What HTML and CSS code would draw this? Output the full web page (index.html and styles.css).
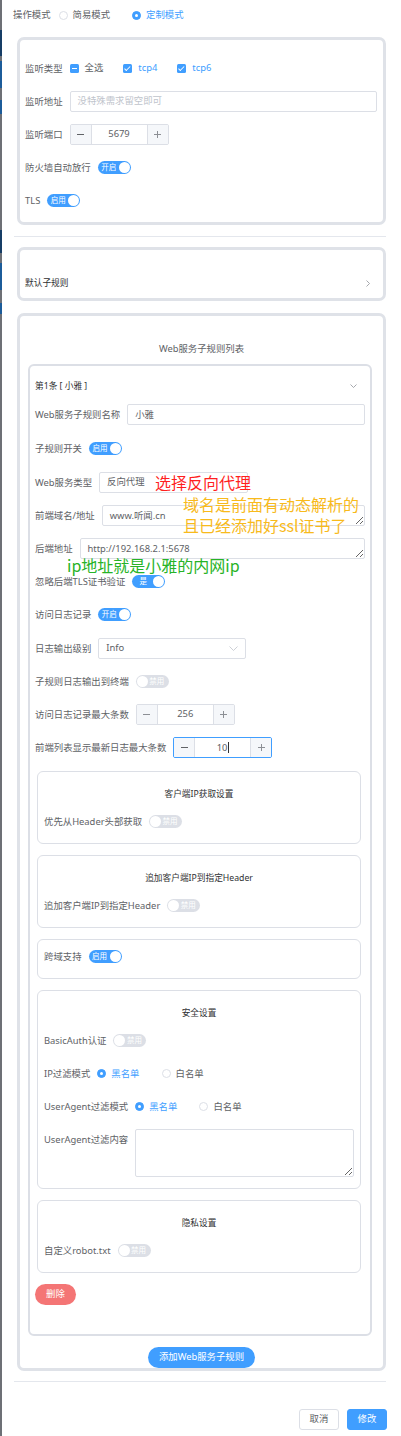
FILE: index.html
```html
<!DOCTYPE html>
<html lang="zh-CN">
<head>
<meta charset="utf-8">
<title>Web服务规则</title>
<link rel="stylesheet" href="styles.css">
</head>
<body>
<div class="app">
  <div class="edge"></div>
  <main class="main">
    <div class="mode-row">
      <span class="lbl">操作模式</span>
      <span class="radio-group">
        <span class="radio"><span class="rd"></span><span>简易模式</span></span>
        <span class="radio active"><span class="rd on"></span><span>定制模式</span></span>
      </span>
    </div>

    <section class="card card-listen">
      <div class="row">
        <span class="lbl">监听类型</span>
        <span class="check-group">
          <span class="check"><span class="cb ind"></span><span>全选</span></span>
          <span class="check active"><span class="cb chk"></span><span>tcp4</span></span>
          <span class="check active"><span class="cb chk"></span><span>tcp6</span></span>
        </span>
      </div>
      <div class="row">
        <span class="lbl">监听地址</span>
        <span class="inp"><span class="ph">没特殊需求留空即可</span></span>
      </div>
      <div class="row">
        <span class="lbl">监听端口</span>
        <span class="num">
          <span class="num-btn minus"><svg width="7" height="7" viewBox="0 0 7 7"><path d="M0 3.5H7" stroke="#606266" stroke-width="1"/></svg></span>
          <span class="num-val">5679</span>
          <span class="num-btn plus"><svg width="7" height="7" viewBox="0 0 7 7"><path d="M0 3.5H7M3.5 0V7" stroke="#8c8f95" stroke-width="1"/></svg></span>
        </span>
      </div>
      <div class="row">
        <span class="lbl">防火墙自动放行</span>
        <span class="sw on"><span class="sw-txt">开启</span><span class="sw-knob"></span></span>
      </div>
      <div class="row">
        <span class="lbl">TLS</span>
        <span class="sw on"><span class="sw-txt">启用</span><span class="sw-knob"></span></span>
      </div>
    </section>

    <div class="divider"></div>

    <section class="card card-default">
      <span>默认子规则</span>
      <svg width="4" height="7" viewBox="0 0 4 7"><path d="M0.5 0.5L3.5 3.5L0.5 6.5" fill="none" stroke="#909399" stroke-width="0.8"/></svg>
    </section>

    <section class="card card-web">
      <div class="card-title">Web服务子规则列表</div>
      <div class="rule-card">
        <div class="rule-head">
          <span>第1条 [ 小雅 ]</span>
          <svg width="7" height="4" viewBox="0 0 7 4"><path d="M0.5 0.5L3.5 3.5L6.5 0.5" fill="none" stroke="#909399" stroke-width="0.8"/></svg>
        </div>
        <div class="rule-form">
          <div class="row first">
            <span class="lbl">Web服务子规则名称</span>
            <span class="inp">小雅</span>
          </div>
          <div class="row">
            <span class="lbl">子规则开关</span>
            <span class="sw on"><span class="sw-txt">启用</span><span class="sw-knob"></span></span>
          </div>
          <div class="row note-host">
            <span class="lbl">Web服务类型</span>
            <span class="sel sel-type">反向代理</span>
            <span class="note note-red">选择反向代理</span>
          </div>
          <div class="row note-host">
            <span class="lbl">前端域名/地址</span>
            <textarea class="ta" rows="1">www.听闻.cn</textarea>
            <span class="note note-orange">域名是前面有动态解析的<br>且已经添加好ssl证书了</span>
          </div>
          <div class="row note-host">
            <span class="lbl">后端地址</span>
            <textarea class="ta" rows="1">http://192.168.2.1:5678</textarea>
            <span class="note note-green">ip地址就是小雅的内网ip</span>
          </div>
          <div class="row">
            <span class="lbl">忽略后端TLS证书验证</span>
            <span class="sw on"><span class="sw-txt">是</span><span class="sw-knob"></span></span>
          </div>
          <div class="row">
            <span class="lbl">访问日志记录</span>
            <span class="sw on"><span class="sw-txt">开启</span><span class="sw-knob"></span></span>
          </div>
          <div class="row">
            <span class="lbl">日志输出级别</span>
            <span class="sel sel-level">
              <span>Info</span>
              <svg width="9" height="5" viewBox="0 0 9 5"><path d="M0.5 0.5L4.5 4.5L8.5 0.5" fill="none" stroke="#c0c4cc" stroke-width="0.8"/></svg>
            </span>
          </div>
          <div class="row">
            <span class="lbl">子规则日志输出到终端</span>
            <span class="sw off"><span class="sw-knob"></span><span class="sw-txt">禁用</span></span>
          </div>
          <div class="row">
            <span class="lbl">访问日志记录最大条数</span>
            <span class="num">
              <span class="num-btn minus"><svg width="7" height="7" viewBox="0 0 7 7"><path d="M0 3.5H7" stroke="#8c8f95" stroke-width="1"/></svg></span>
              <span class="num-val">256</span>
              <span class="num-btn plus"><svg width="7" height="7" viewBox="0 0 7 7"><path d="M0 3.5H7M3.5 0V7" stroke="#8c8f95" stroke-width="1"/></svg></span>
            </span>
          </div>
          <div class="row">
            <span class="lbl">前端列表显示最新日志最大条数</span>
            <span class="num focus">
              <span class="num-btn minus"><svg width="7" height="7" viewBox="0 0 7 7"><path d="M0 3.5H7" stroke="#606266" stroke-width="1"/></svg></span>
              <span class="num-val">10<span class="caret"></span></span>
              <span class="num-btn plus"><svg width="7" height="7" viewBox="0 0 7 7"><path d="M0 3.5H7M3.5 0V7" stroke="#8c8f95" stroke-width="1"/></svg></span>
            </span>
          </div>

          <div class="groups">
            <div class="sub">
              <div class="sub-title">客户端IP获取设置</div>
              <div class="sub-rows">
                <div class="row">
                  <span class="lbl">优先从Header头部获取</span>
                  <span class="sw off"><span class="sw-knob"></span><span class="sw-txt">禁用</span></span>
                </div>
              </div>
            </div>
            <div class="sub">
              <div class="sub-title">追加客户端IP到指定Header</div>
              <div class="sub-rows">
                <div class="row">
                  <span class="lbl">追加客户端IP到指定Header</span>
                  <span class="sw off"><span class="sw-knob"></span><span class="sw-txt">禁用</span></span>
                </div>
              </div>
            </div>
            <div class="sub">
              <div class="sub-rows">
                <div class="row">
                  <span class="lbl">跨域支持</span>
                  <span class="sw on"><span class="sw-txt">启用</span><span class="sw-knob"></span></span>
                </div>
              </div>
            </div>
            <div class="sub">
              <div class="sub-title">安全设置</div>
              <div class="sub-rows">
                <div class="row">
                  <span class="lbl">BasicAuth认证</span>
                  <span class="sw off"><span class="sw-knob"></span><span class="sw-txt">禁用</span></span>
                </div>
                <div class="row">
                  <span class="lbl">IP过滤模式</span>
                  <span class="radio-group">
                    <span class="radio active"><span class="rd on"></span><span>黑名单</span></span>
                    <span class="radio"><span class="rd"></span><span>白名单</span></span>
                  </span>
                </div>
                <div class="row">
                  <span class="lbl">UserAgent过滤模式</span>
                  <span class="radio-group">
                    <span class="radio active"><span class="rd on"></span><span>黑名单</span></span>
                    <span class="radio"><span class="rd"></span><span>白名单</span></span>
                  </span>
                </div>
                <div class="row row-top">
                  <span class="lbl">UserAgent过滤内容</span>
                  <textarea class="ta ta-big" rows="3"></textarea>
                </div>
              </div>
            </div>
            <div class="sub">
              <div class="sub-title">隐私设置</div>
              <div class="sub-rows">
                <div class="row">
                  <span class="lbl">自定义robot.txt</span>
                  <span class="sw off"><span class="sw-knob"></span><span class="sw-txt">禁用</span></span>
                </div>
              </div>
            </div>
            <button class="btn-del">删除</button>
          </div>
        </div>
      </div>
      <button class="btn-add">添加Web服务子规则</button>
    </section>

    <div class="divider divider-bottom"></div>

    <div class="footer">
      <button class="btn btn-plain">取消</button>
      <button class="btn btn-primary">修改</button>
    </div>
  </main>
</div>
</body>
</html>
```

FILE: styles.css
```css
* { box-sizing: border-box; }
html, body { margin: 0; padding: 0; background: #fff; }
body {
  width: 401px;
  font-family: "Noto Sans", "Noto Sans CJK SC", sans-serif;
  font-size: 9.4px;
  line-height: 14px;
  color: #606266;
}
.app { display: flex; min-height: 1436px; }
.edge {
  width: 2px;
  flex: none;
  background: linear-gradient(to bottom,
    #6d7076 0, #6d7076 30px,
    #163d66 30px, #163d66 56px,
    #6d7076 56px, #6d7076 61px,
    #1c5c9a 61px, #1c5c9a 88px,
    #6d7076 88px, #6d7076 100px,
    #1c5c9a 100px, #1c5c9a 114px,
    #6d7076 114px, #6d7076 230px,
    #163d66 230px, #163d66 253px,
    #6d7076 253px, #6d7076 263px,
    #1c5c9a 263px, #1c5c9a 290px,
    #6d7076 290px, #6d7076 303px,
    #1c5c9a 303px, #1c5c9a 314px,
    #6d7076 314px, #6d7076 100%);
}
.main { flex: 1; min-width: 0; padding: 8px 15px 0 12px; }

/* generic controls */
.row { display: flex; align-items: center; height: 21px; flex: none; }
.row-top { align-items: flex-start; height: auto; }
.lbl { margin-right: 7px; white-space: nowrap; flex: none; line-height: 21px; }

.radio-group { display: flex; gap: 22px; }
.radio { display: inline-flex; align-items: center; gap: 5px; white-space: nowrap; }
.radio.active { color: #409eff; }
.rd { width: 9px; height: 9px; border-radius: 50%; border: 1px solid #dcdfe6; background: #fff; position: relative; flex: none; }
.rd.on { background: #409eff; border-color: #409eff; }
.rd.on::after { content: ""; position: absolute; left: 50%; top: 50%; width: 3px; height: 3px; margin: -1.5px 0 0 -1.5px; border-radius: 50%; background: #fff; }

.check-group { display: flex; gap: 20px; }
.check { display: inline-flex; align-items: center; gap: 6px; white-space: nowrap; }
.check.active { color: #409eff; }
.cb { width: 9px; height: 9px; border-radius: 1.5px; background: #409eff; position: relative; flex: none; }
.cb.ind::after { content: ""; position: absolute; left: 2px; right: 2px; top: 4px; height: 1px; background: #fff; }
.cb.chk::after { content: ""; position: absolute; left: 3px; top: 1px; width: 2px; height: 4.5px; border: solid #fff; border-width: 0 1px 1px 0; transform: rotate(45deg); }

.inp { flex: 1; min-width: 0; height: 21px; border: 1px solid #dcdfe6; border-radius: 2px; padding: 0 7px; display: flex; align-items: center; color: #606266; background: #fff; }
.ph { color: #c0c4cc; }

.num { display: flex; width: 99px; height: 21px; border: 1px solid #dcdfe6; border-radius: 2px; flex: none; overflow: hidden; background: #fff; }
.num.focus { border-color: #409eff; }
.num-btn { width: 21px; flex: none; background: #f5f7fa; display: flex; align-items: center; justify-content: center; }
.num-btn.minus { border-right: 1px solid #dcdfe6; }
.num-btn.plus { border-left: 1px solid #dcdfe6; }
.num-val { flex: 1; display: flex; align-items: center; justify-content: center; color: #606266; }
.caret { display: inline-block; width: 1px; height: 11px; background: #303133; margin-left: 0.5px; }

.sel { height: 21px; border: 1px solid #dcdfe6; border-radius: 2px; padding: 0 7px; display: flex; align-items: center; justify-content: space-between; flex: none; background: #fff; }
.sel-type { width: 149px; }
.sel-level { width: 148px; }

.ta {
  flex: 1;
  min-width: 0;
  height: 21px;
  font: inherit;
  line-height: 13px;
  color: #606266;
  border: 1px solid #dcdfe6;
  border-radius: 2px;
  padding: 3px 7px;
  resize: vertical;
  overflow: hidden;
  background: #fff;
  margin: 0;
}
.ta-big { height: 48px; }

.sw { display: inline-flex; align-items: center; width: 33px; height: 13px; border-radius: 7px; padding: 0 1px; flex: none; }
.sw.on { background: #409eff; }
.sw.off { background: #dcdfe6; }
.sw-txt { flex: 1; text-align: center; font-size: 7.5px; line-height: 13px; color: #fff; white-space: nowrap; }
.sw.off .sw-txt { text-align: left; padding-left: 1.5px; }
.sw-knob { width: 11px; height: 11px; border-radius: 50%; background: #fff; flex: none; }

/* top */
.mode-row { display: flex; align-items: center; height: 14px; margin-left: -1px; }
.mode-row .lbl { margin-right: 8px; line-height: 14px; }

/* cards */
.card { border: 3px solid #dfe2e8; border-radius: 7px; margin-left: 3px; background: #fff; }
.card-listen { margin-top: 15px; padding: 17.5px 6px 11.5px 5px; display: flex; flex-direction: column; gap: 12px; }
.divider { height: 1px; background: #e4e7ed; margin-top: 11px; }
.card-default { margin-top: 10px; padding: 26px 13px 8px 5px; display: flex; justify-content: space-between; align-items: center; line-height: 14px; font-size: 8.7px; color: #303133; }
.card-web { margin-top: 12px; padding: 26px 11px 0 8px; display: flex; flex-direction: column; }
.card-title { line-height: 14px; text-align: center; margin: 0 -11px 0 -8px; color: #606266; }

.rule-card { position: relative; margin-top: 8px; border: 2px solid #dcdfe6; border-radius: 6px; padding: 0 5px 29px 5px; }
.rule-head { height: 38px; padding: 2px 8px 0 0; display: flex; justify-content: space-between; align-items: center; font-size: 8.7px; color: #303133; }
.rule-form { display: flex; flex-direction: column; gap: 12.2px; }
.rule-form .row.first { margin-bottom: 1.3px; }

.note-host { position: relative; }
.note { position: absolute; font-family: "Noto Sans CJK SC", "Noto Sans", sans-serif; font-size: 16px; line-height: 21px; white-space: nowrap; pointer-events: none; }
.note-red { color: #ff1f1f; left: 120px; top: 0; }
.note-orange { color: #f8ba1c; left: 148px; top: -10.4px; }
.note-green { color: #27b327; left: 32px; top: 17px; }

.groups { margin-top: 0.5px; display: flex; flex-direction: column; gap: 11px; }
.sub { border: 1px solid #dcdfe6; border-radius: 6px; margin: 0 4px 0 2px; padding: 6.5px 6px 10.5px 6px; }
.sub-title { height: 33px; line-height: 33px; text-align: center; font-size: 8.7px; color: #303133; }
.sub-rows { display: flex; flex-direction: column; gap: 12px; }

button { font: inherit; margin: 0; cursor: pointer; }
.btn-del { align-self: flex-start; width: 41px; height: 21px; border: 0; border-radius: 11px; background: #f47575; color: #fff; padding: 0; }
.btn-add { align-self: center; margin: 11px 0 0 3px; width: 107px; height: 21px; border: 0; border-radius: 11px; background: #409eff; color: #fff; padding: 0; }

.divider-bottom { margin-top: 10px; }
.footer { display: flex; justify-content: flex-end; gap: 8px; margin-top: 27px; margin-right: -1px; }
.btn { width: 40px; height: 21px; border-radius: 3px; padding: 0; }
.btn-plain { background: #fff; border: 1px solid #dcdfe6; color: #606266; }
.btn-primary { background: #409eff; border: 1px solid #409eff; color: #fff; }
```
